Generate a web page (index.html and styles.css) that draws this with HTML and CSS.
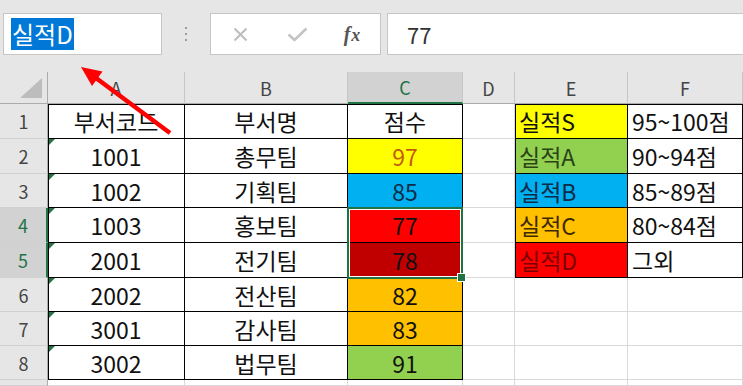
FILE: index.html
```html
<!DOCTYPE html>
<html lang="ko">
<head>
<meta charset="utf-8">
<link rel="stylesheet" href="styles.css">
</head>
<body>
<div class="topbar">
  <div class="namebox"><span class="hl">실적D</span></div>
  <div class="dots"><i></i><i></i><i></i></div>
  <div class="fnbox">
    <span class="ico ico-x"><svg width="15" height="15" viewBox="0 0 15 15"><path d="M1.5 1.5 L13.5 13.5 M13.5 1.5 L1.5 13.5" stroke="#BDBDBD" stroke-width="2" fill="none"/></svg></span>
    <span class="ico ico-ok"><svg width="21" height="15" viewBox="0 0 21 15"><path d="M1.5 7.5 L7.5 13 L19.5 1.5" stroke="#C4C4C4" stroke-width="2.6" fill="none"/></svg></span>
    <span class="fx"><i>f</i><i class="fxx">x</i></span>
  </div>
  <div class="formula">77</div>
</div>
<div class="sheet">
  <div class="corner"><svg width="22" height="20" viewBox="0 0 22 20"><polygon points="22,0 22,20 0,20" fill="#BDBDBD"/></svg></div>
  <div class="ch">A</div>
  <div class="ch">B</div>
  <div class="ch sel">C</div>
  <div class="ch">D</div>
  <div class="ch">E</div>
  <div class="ch">F</div>

  <div class="rh">1</div>
  <div class="c bx bt bl">부서코드</div>
  <div class="c bx bt">부서명</div>
  <div class="c bx bt">점수</div>
  <div class="c"></div>
  <div class="c l bx bt bl y">실적S</div>
  <div class="c l bx bt">95~100점</div>

  <div class="rh">2</div>
  <div class="c bx bl tri">1001</div>
  <div class="c bx">총무팀</div>
  <div class="c bx y t-or">97</div>
  <div class="c"></div>
  <div class="c l bx bl g t-g">실적A</div>
  <div class="c l bx">90~94점</div>

  <div class="rh">3</div>
  <div class="c bx bl tri">1002</div>
  <div class="c bx">기획팀</div>
  <div class="c bx b t-b">85</div>
  <div class="c"></div>
  <div class="c l bx bl b t-b">실적B</div>
  <div class="c l bx">85~89점</div>

  <div class="rh sel">4</div>
  <div class="c bx bl tri">1003</div>
  <div class="c bx">홍보팀</div>
  <div class="c bx r rel">77<span class="selbox"><span class="handle"></span></span></div>
  <div class="c"></div>
  <div class="c l bx bl o t-o">실적C</div>
  <div class="c l bx">80~84점</div>

  <div class="rh sel">5</div>
  <div class="c bx bl tri">2001</div>
  <div class="c bx">전기팀</div>
  <div class="c bx dr">78</div>
  <div class="c"></div>
  <div class="c l bx bl r t-r">실적D</div>
  <div class="c l bx">그외</div>

  <div class="rh">6</div>
  <div class="c bx bl tri">2002</div>
  <div class="c bx">전산팀</div>
  <div class="c bx o">82</div>
  <div class="c"></div>
  <div class="c"></div>
  <div class="c"></div>

  <div class="rh">7</div>
  <div class="c bx bl tri">3001</div>
  <div class="c bx">감사팀</div>
  <div class="c bx o">83</div>
  <div class="c"></div>
  <div class="c"></div>
  <div class="c"></div>

  <div class="rh">8</div>
  <div class="c bx bl tri">3002</div>
  <div class="c bx">법무팀</div>
  <div class="c bx g">91</div>
  <div class="c"></div>
  <div class="c"></div>
  <div class="c"></div>

  <div class="rh"></div>
  <div class="c"></div>
  <div class="c"></div>
  <div class="c"></div>
  <div class="c"></div>
  <div class="c"></div>
  <div class="c"></div>
</div>
<svg class="arrow" width="743" height="386" viewBox="0 0 743 386">
  <line x1="170" y1="133" x2="96" y2="78" stroke="#FF0000" stroke-width="4.5" stroke-linecap="butt"/>
  <polygon points="81,67 102.5,71.5 92,86" fill="#FF0000"/>
</svg>
</body>
</html>
```
FILE: styles.css
```css
html, body {
  margin: 0;
  padding: 0;
}
body {
  width: 743px;
  height: 386px;
  overflow: hidden;
  background: #E6E6E6;
  font-family: "Noto Sans CJK KR", "Noto Sans", sans-serif;
  position: relative;
}
.topbar {
  height: 72px;
  box-sizing: border-box;
  padding-top: 13px;
  display: flex;
  align-items: flex-start;
}
.namebox {
  margin-left: 3px;
  width: 159px;
  height: 42px;
  box-sizing: border-box;
  background: #fff;
  border: 1px solid #C6C6C6;
  display: flex;
  align-items: center;
  padding-left: 7px;
}
.namebox .hl {
  background: #0078D7;
  color: #fff;
  font-size: 24px;
  line-height: 32px;
  height: 32px;
  padding: 0 1px;
}
.dots {
  width: 48px;
  height: 42px;
  display: flex;
  flex-direction: column;
  align-items: center;
  justify-content: center;
  gap: 4px;
}
.dots i {
  display: block;
  width: 2px;
  height: 2px;
  background: #9C9C9C;
}
.fnbox {
  width: 171px;
  height: 42px;
  box-sizing: border-box;
  background: #fff;
  border: 1px solid #C6C6C6;
  display: flex;
  align-items: center;
}
.ico {
  display: flex;
  align-items: center;
  justify-content: center;
  width: 30px;
  height: 30px;
}
.ico-x { margin-left: 14px; }
.ico-ok { margin-left: 27px; }
.fx {
  display: block;
  margin-left: 25px;
  width: 30px;
  text-align: center;
  font-family: "Liberation Serif", serif;
  font-weight: bold;
  font-style: italic;
  color: #555;
  font-size: 20px;
  line-height: 30px;
}
.fx i {
  font-style: italic;
  vertical-align: baseline;
}
.fx .fxx {
  font-size: 18px;
  margin-left: 1px;
}
.formula {
  flex: 1;
  margin-left: 6px;
  margin-right: -2px;
  height: 42px;
  box-sizing: border-box;
  background: #fff;
  border: 1px solid #C6C6C6;
  padding-left: 19px;
  font-size: 22px;
  line-height: 40px;
  color: #333;
}
.sheet {
  display: grid;
  grid-template-columns: 48px 137px 163px 115px 52px 113px 115px;
  grid-template-rows: 32px 35px 35px 34px 35px 35px 34px 34px 34px 6px;
  background: #fff;
}
.corner {
  background: #E6E6E6;
  border-right: 1px solid #ABABAB;
  border-bottom: 1px solid #ABABAB;
  box-sizing: border-box;
  display: flex;
  align-items: flex-end;
  justify-content: flex-end;
  padding: 0 5px 5px 0;
}
.ch {
  background: #E6E6E6;
  border-right: 1px solid #C6C6C6;
  border-bottom: 1px solid #ABABAB;
  box-sizing: border-box;
  display: flex;
  align-items: center;
  justify-content: center;
  font-size: 18px;
  color: #444;
}
.ch.sel {
  background: #D2D2D2;
  color: #217346;
  border-bottom: 2px solid #217346;
}
.rh {
  background: #E6E6E6;
  border-right: 1px solid #ABABAB;
  border-bottom: 1px solid #D0D0D0;
  box-sizing: border-box;
  display: flex;
  align-items: center;
  justify-content: center;
  font-size: 18px;
  color: #444;
}
.rh.sel {
  background: #D2D2D2;
  color: #217346;
  border-right: 2px solid #217346;
}
.c {
  background: #fff;
  border-right: 1px solid #D9D9D9;
  border-bottom: 1px solid #D9D9D9;
  box-sizing: border-box;
  display: flex;
  align-items: center;
  justify-content: center;
  font-size: 23px;
  color: #111;
  white-space: nowrap;
}
.c.l {
  justify-content: flex-start;
  padding-left: 4px;
}
.c.bx {
  border-right-color: #000;
  border-bottom-color: #000;
}
.c.bt { box-shadow: inset 0 1px 0 #000; }
.c.bl { box-shadow: inset 1px 0 0 #000; }
.c.bt.bl { box-shadow: inset 1px 1px 0 #000; }
.y { background: #FFFF00; }
.b { background: #00B0F0; }
.r { background: #FF0000; }
.dr { background: #C00000; }
.o { background: #FFC000; }
.g { background: #92D050; }
.t-or { color: #C55A11; }
.t-b { color: #0F2B46; }
.t-g { color: #2A4418; }
.t-o { color: #3F2A00; }
.t-r { color: #7A0000; }
.tri { position: relative; }
.tri::before {
  content: "";
  position: absolute;
  top: 0;
  left: 1px;
  border-top: 6px solid #217346;
  border-right: 6px solid transparent;
}
.rel { position: relative; }
.selbox {
  position: absolute;
  left: -1px;
  top: -1px;
  width: calc(100% + 2px);
  height: 72px;
  box-sizing: border-box;
  border: 2px solid #217346;
  box-shadow: inset 0 0 0 1px #fff;
  z-index: 3;
}
.handle {
  position: absolute;
  right: -5px;
  bottom: -5px;
  width: 7px;
  height: 7px;
  background: #217346;
  border: 1px solid #fff;
}
.arrow {
  position: absolute;
  left: 0;
  top: 0;
  pointer-events: none;
  z-index: 10;
}
```
